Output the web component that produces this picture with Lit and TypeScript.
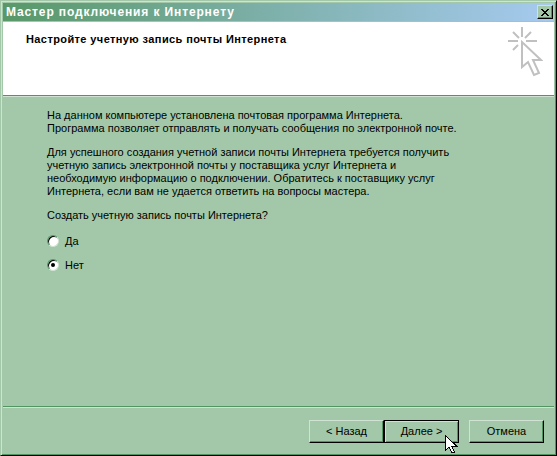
import { LitElement, html, css } from 'lit';
import { customElement } from 'lit/decorators.js';

@customElement('app-root')
export class AppRoot extends LitElement {
  static styles = css`
    :host {
      display: block;
      width: 557px;
      height: 456px;
      overflow: hidden;
    }

    .window {
      box-sizing: border-box;
      width: 557px;
      height: 456px;
      display: flex;
      flex-direction: column;
      background: #a2c8a9;
      color: #000;
      font-family: 'Liberation Sans', Arial, sans-serif;
      font-size: 11px;
      line-height: 13px;
      border: 1px solid;
      border-color: #a2c8a9 #000 #000 #a2c8a9;
      box-shadow: inset 1px 1px 0 #d0e3d3, inset -1px -1px 0 #519562;
      padding: 2px 2px 2px 2px;
    }

    .titlebar {
      height: 18px;
      flex: none;
      display: flex;
      align-items: center;
      justify-content: space-between;
      padding: 0 1px 0 3px;
      background: linear-gradient(to right, #589868, #a6caf0);
      color: #fff;
      font-size: 12px;
      font-weight: 700;
      letter-spacing: 0.87px;
      white-space: nowrap;
    }

    .close {
      box-sizing: border-box;
      width: 16px;
      height: 14px;
      display: flex;
      align-items: center;
      justify-content: center;
      background: #a2c8a9;
      border: 1px solid;
      border-color: #d0e3d3 #000 #000 #d0e3d3;
      box-shadow: inset -1px -1px 0 #519562;
    }

    .header {
      flex: none;
      height: 73px;
      margin-top: 1px;
      display: flex;
      justify-content: space-between;
      background: #fff;
      padding: 11px 11px 0 23px;
      box-sizing: border-box;
      font-weight: 700;
      letter-spacing: 0.4px;
    }

    .wizard-icon {
      margin-top: -7px;
    }

    .etched {
      flex: none;
      height: 1px;
      background: #519562;
      border-bottom: 1px solid #d0e3d3;
    }

    .content {
      flex: 1;
      padding: 12px 0 0 44px;
      white-space: nowrap;
    }

    .content p {
      margin: 0 0 11px;
    }

    .content p.question {
      margin-bottom: 7px;
    }

    .option {
      display: flex;
      align-items: center;
      gap: 6px;
      height: 24px;
    }

    .radio {
      box-sizing: border-box;
      width: 12px;
      height: 12px;
      display: flex;
      align-items: center;
      justify-content: center;
      border-radius: 50%;
      background: #fff;
      border: 1px solid;
      border-color: #519562 #d0e3d3 #d0e3d3 #519562;
      box-shadow: inset 1px 1px 0 #000;
    }

    .radio.checked::after {
      content: '';
      width: 4px;
      height: 4px;
      border-radius: 50%;
      background: #000;
    }

    .footer {
      flex: none;
      height: 45px;
      display: flex;
      justify-content: flex-end;
      padding: 12px 10px 0 0;
      box-sizing: border-box;
    }

    .btn {
      position: relative;
      box-sizing: border-box;
      width: 75px;
      height: 23px;
      display: flex;
      align-items: center;
      justify-content: center;
      background: #a2c8a9;
      border: 1px solid;
      border-color: #d0e3d3 #000 #000 #d0e3d3;
      box-shadow: inset -1px -1px 0 #519562;
    }

    .btn.default {
      border-color: #000;
      box-shadow: inset 1px 1px 0 #d0e3d3, inset -1px -1px 0 #519562;
    }

    .btn.cancel {
      margin-left: 10px;
    }

    .pointer {
      position: absolute;
      left: 60px;
      top: 14px;
    }
  `;

  render() {
    return html`
      <div class="window">
        <div class="titlebar">
          <span>Мастер подключения к Интернету</span>
          <span class="close">
            <svg width="8" height="7" viewBox="0 0 8 7" shape-rendering="crispEdges">
              <path d="M0 0h2v1h1v1h2v-1h1v-1h2v1h-1v1h-1v1h-1v1h1v1h1v1h1v1h-2v-1h-1v-1h-2v1h-1v1h-2v-1h1v-1h1v-1h1v-1h-1v-1h-1v-1h-1z" fill="#000"/>
            </svg>
          </span>
        </div>

        <div class="header">
          <span>Настройте учетную запись почты Интернета</span>
          <svg class="wizard-icon" width="36" height="53" viewBox="0 0 36 53" fill="none" stroke="#c0c0c0" stroke-width="2">
            <path d="M1 15h10M19 15h11M15 1v10M6 6l6 6M24 6l-6 6M6 24l5-5" />
            <path d="M15 16v25l6-5 6 13 5-2-6-13h8z" />
          </svg>
        </div>
        <div class="etched"></div>

        <div class="content">
          <p>На данном компьютере установлена почтовая программа Интернета.<br />
            Программа позволяет отправлять и получать сообщения по электронной почте.</p>
          <p>Для успешного создания учетной записи почты Интернета требуется получить<br />
            учетную запись электронной почты у поставщика услуг Интернета и<br />
            необходимую информацию о подключении. Обратитесь к поставщику услуг<br />
            Интернета, если вам не удается ответить на вопросы мастера.</p>
          <p class="question">Создать учетную запись почты Интернета?</p>
          <div class="option"><span class="radio"></span>Да</div>
          <div class="option"><span class="radio checked"></span>Нет</div>
        </div>

        <div class="etched"></div>
        <div class="footer">
          <div class="btn">&lt; Назад</div>
          <div class="btn default">Далее &gt;
            <svg class="pointer" width="13" height="19" viewBox="0 0 13 19" shape-rendering="crispEdges">
              <path d="M.5.5v15l3.500-3.500 3 6 2.500-1-3-6h5z" fill="#fff" stroke="#000" />
            </svg>
          </div>
          <div class="btn cancel">Отмена</div>
        </div>
      </div>
    `;
  }
}
